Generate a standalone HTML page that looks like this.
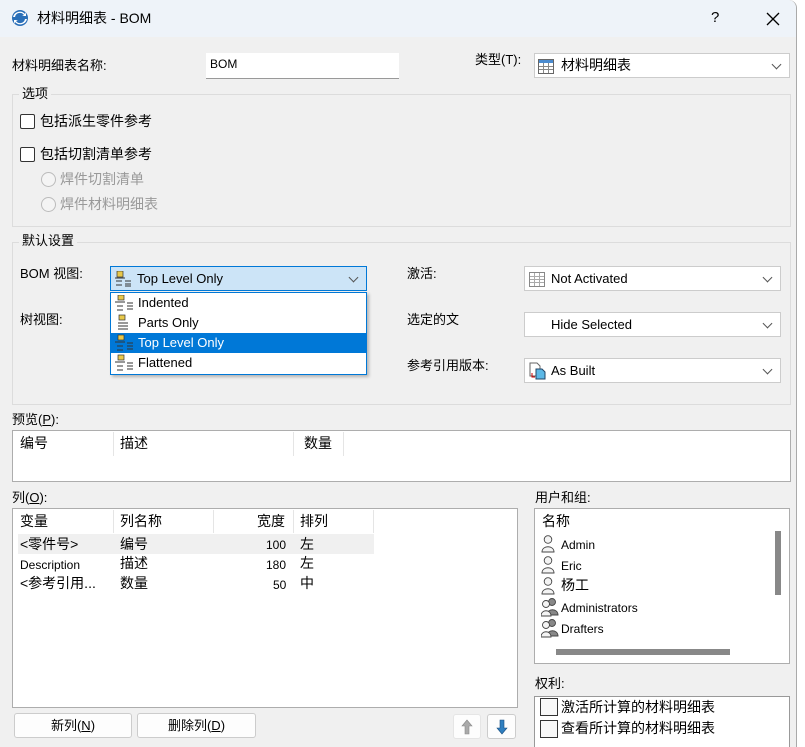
<!DOCTYPE html>
<html><head><meta charset="utf-8"><style>
html,body{margin:0;width:805px;height:747px;overflow:hidden}
body{background:#fff;font-family:"Liberation Sans","Noto Sans CJK SC",sans-serif;font-size:13px;color:#000;position:relative}
.a{position:absolute}
.dlg{position:absolute;left:0;top:0;width:796px;height:747px;background:#f0f0f0;border-right:1px solid #aaa;border-top-right-radius:8px}
.tb{position:absolute;left:0;top:0;width:796px;height:37px;background:#eef3f9;border-top-right-radius:8px}
.t{position:absolute;white-space:nowrap;line-height:16px}
.box{position:absolute;background:#fff;border:1px solid #adadad;box-sizing:border-box}
.grp{position:absolute;border:1px solid #dcdcdc;box-sizing:border-box}
.leg{position:absolute;background:#f0f0f0;padding:0 3px;line-height:16px;white-space:nowrap}
.cb{position:absolute;width:13px;height:13px;border:1px solid #333;border-radius:2px;background:#fff}
.rd{position:absolute;width:13px;height:13px;border:1px solid #bbb;border-radius:50%;background:#f4f4f4}
.combo{position:absolute;background:#fff;border:1px solid #ccc;box-sizing:border-box;height:25px}
.combo .v{position:absolute;right:9px;top:7px;width:6px;height:6px;border-right:1px solid #555;border-bottom:1px solid #555;transform:rotate(45deg)}
.btn{position:absolute;background:#fdfdfd;border:1px solid #ccc;border-radius:3px;box-sizing:border-box;text-align:center;line-height:23px}
.sep{position:absolute;width:1px;background:#e5e5e5}
.gray{color:#999}
</style></head><body>
<div class="dlg"></div>
<div class="tb"></div>
<svg class="a" style="left:11px;top:9px" width="18" height="18" viewBox="0 0 18 18"><circle cx="9" cy="9" r="8" fill="#2a6fb8"/><path d="M4 8a5 5 0 0 1 9-2l-2 1h4V3l-1 2A7 7 0 0 0 2 8z" fill="#fff"/><path d="M14 10a5 5 0 0 1-9 2l2-1H3v4l1-2a7 7 0 0 0 12-3z" fill="#fff"/></svg>
<div class="t" style="left:37px;top:10px;font-size:14px">材料明细表 - BOM</div>
<div class="t" style="left:711px;top:10px;font-size:15px">?</div>
<svg class="a" style="left:766px;top:12px" width="14" height="14"><path d="M1 1L13 13M13 1L1 13" stroke="#000" stroke-width="1.3"/></svg>

<div class="t" style="left:12px;top:58px">材料明细表名称:</div>
<div class="a" style="left:206px;top:53px;width:193px;height:25px;background:#fff;border-bottom:1px solid #999"></div>
<div class="t" style="left:210px;top:56px;font-size:12px">BOM</div>
<div class="t" style="left:475px;top:52px">类型(T):</div>
<div class="combo" style="left:534px;top:53px;width:256px"><svg class="a" style="left:3px;top:5px" width="16" height="15"><rect x=".5" y=".5" width="15" height="14" fill="#fff" stroke="#666"/><rect x="1" y="1" width="14" height="3" fill="#4a8bd0"/><path d="M1 7.5h14M1 10.5h14M5.5 4v10M10.5 4v10" stroke="#888"/></svg><div class="t" style="left:26px;top:3px;font-size:14px">材料明细表</div><div class="v"></div></div>

<div class="grp" style="left:12px;top:94px;width:779px;height:133px"></div>
<div class="leg" style="left:19px;top:86px">选项</div>
<div class="cb" style="left:20px;top:114px"></div><div class="t" style="left:40px;top:113px;font-size:14px">包括派生零件参考</div>
<div class="cb" style="left:20px;top:147px"></div><div class="t" style="left:40px;top:146px;font-size:14px">包括切割清单参考</div>
<div class="rd" style="left:41px;top:172px"></div><div class="t gray" style="left:60px;top:171px;font-size:14px">焊件切割清单</div>
<div class="rd" style="left:41px;top:197px"></div><div class="t gray" style="left:60px;top:196px;font-size:14px">焊件材料明细表</div>

<div class="grp" style="left:12px;top:242px;width:779px;height:163px"></div>
<div class="leg" style="left:19px;top:233px">默认设置</div>
<div class="t" style="left:20px;top:266px">BOM 视图:</div>
<div class="combo" style="left:110px;top:266px;width:257px;background:#cce4f7;border-color:#0078d7"><svg class="a" style="left:4px;top:4px" width="18" height="16"><rect x="2" y="0" width="6" height="6" fill="#e8c84a" stroke="#333" stroke-width=".7"/><path d="M0 7h10M1 10h6M1 14h6M10 10h6M10 13h6M10 15h6" stroke="#333"/></svg><div class="t" style="left:26px;top:4px">Top Level Only</div><div class="v"></div></div>
<div class="a" style="left:110px;top:292px;width:257px;height:83px;background:#fff;border:1px solid #0078d7;box-sizing:border-box;box-shadow:2px 2px 3px rgba(0,0,0,.25)"></div>
<div class="t" style="left:138px;top:295px">Indented</div>
<div class="t" style="left:138px;top:315px">Parts Only</div>
<div class="a" style="left:111px;top:333px;width:255px;height:20px;background:#0078d7"></div>
<div class="t" style="left:138px;top:335px;color:#fff">Top Level Only</div>
<div class="t" style="left:138px;top:355px">Flattened</div>
<svg class="a" style="left:115px;top:295px" width="20" height="78"><g fill="#e8c84a" stroke="#333" stroke-width=".7"><rect x="3" y="0" width="6" height="5"/><rect x="4" y="20" width="6" height="5"/><rect x="3" y="40" width="6" height="5"/><rect x="3" y="60" width="6" height="5"/></g><g stroke="#333"><path d="M0 7h10M2 11h6M2 15h6M12 8h6M12 11h6M12 14h6"/><path d="M3 28h10M3 31h10M3 34h10"/><path d="M0 47h10M2 51h6M2 55h6M12 48h6M12 51h6M12 54h6"/><path d="M0 67h10M2 71h6M2 75h6M12 68h6M12 71h6M12 74h6"/></g></svg>
<div class="t" style="left:20px;top:312px">树视图:</div>

<div class="t" style="left:407px;top:266px">激活:</div>
<div class="combo" style="left:524px;top:266px;width:257px"><svg class="a" style="left:4px;top:5px" width="16" height="15"><rect x=".5" y=".5" width="15" height="14" fill="#fff" stroke="#888"/><path d="M1 4.5h14M1 7.5h14M1 10.5h14M5.5 1v13M10.5 1v13" stroke="#aaa"/></svg><div class="t" style="left:26px;top:4px">Not Activated</div><div class="v"></div></div>
<div class="t" style="left:407px;top:312px">选定的文</div>
<div class="combo" style="left:524px;top:312px;width:257px"><div class="t" style="left:26px;top:4px">Hide Selected</div><div class="v"></div></div>
<div class="t" style="left:407px;top:358px">参考引用版本:</div>
<div class="combo" style="left:524px;top:358px;width:257px"><svg class="a" style="left:4px;top:3px" width="18" height="18"><path d="M1 1h7l3 3v10H1z" fill="#fff" stroke="#666"/><path d="M3 11v4h3" stroke="#c00" fill="none"/><path d="M7 7h6l3 3v7H7z" fill="#5cb8e6" stroke="#246"/></svg><div class="t" style="left:26px;top:4px">As Built</div><div class="v"></div></div>

<div class="t" style="left:12px;top:412px">预览(<u>P</u>):</div>
<div class="box" style="left:12px;top:430px;width:779px;height:52px"></div>
<div class="sep" style="left:113px;top:432px;height:24px"></div><div class="sep" style="left:293px;top:432px;height:24px"></div><div class="sep" style="left:343px;top:432px;height:24px"></div>
<div class="t" style="left:20px;top:435px;font-size:14px">编号</div><div class="t" style="left:120px;top:435px;font-size:14px">描述</div><div class="t" style="left:304px;top:435px;font-size:14px">数量</div>

<div class="t" style="left:12px;top:490px">列(<u>O</u>):</div>
<div class="box" style="left:12px;top:508px;width:506px;height:200px"></div>
<div class="sep" style="left:113px;top:510px;height:23px"></div><div class="sep" style="left:213px;top:510px;height:23px"></div><div class="sep" style="left:293px;top:510px;height:23px"></div><div class="sep" style="left:373px;top:510px;height:23px"></div>
<div class="t" style="left:20px;top:513px;font-size:14px">变量</div><div class="t" style="left:120px;top:513px;font-size:14px">列名称</div><div class="t" style="left:257px;top:513px;font-size:14px">宽度</div><div class="t" style="left:300px;top:513px;font-size:14px">排列</div>
<div class="a" style="left:18px;top:534px;width:356px;height:20px;background:#f0f0f0"></div>
<div class="t" style="left:20px;top:536px;font-size:14px">&lt;零件号&gt;</div><div class="t" style="left:120px;top:536px;font-size:14px">编号</div><div class="t" style="left:266px;top:537px;font-size:12px">100</div><div class="t" style="left:300px;top:536px;font-size:14px">左</div>
<div class="t" style="left:20px;top:557px;font-size:12px">Description</div><div class="t" style="left:120px;top:555px;font-size:14px">描述</div><div class="t" style="left:266px;top:557px;font-size:12px">180</div><div class="t" style="left:300px;top:555px;font-size:14px">左</div>
<div class="t" style="left:20px;top:575px;font-size:14px">&lt;参考引用...</div><div class="t" style="left:120px;top:575px;font-size:14px">数量</div><div class="t" style="left:273px;top:577px;font-size:12px">50</div><div class="t" style="left:300px;top:575px;font-size:14px">中</div>
<div class="btn" style="left:14px;top:713px;width:118px;height:25px">新列(<u>N</u>)</div>
<div class="btn" style="left:137px;top:713px;width:119px;height:25px">删除列(<u>D</u>)</div>
<div class="btn" style="left:453px;top:714px;width:28px;height:25px;border-color:#e5e5e5"><svg width="12" height="16" style="margin-top:4px"><path d="M6 1L1 7h3v8h4V7h3z" fill="#aaa" stroke="#888" stroke-width=".6"/></svg></div>
<div class="btn" style="left:487px;top:714px;width:29px;height:25px"><svg width="12" height="16" style="margin-top:4px"><path d="M6 15L1 9h3V1h4v8h3z" fill="#2f7fc0" stroke="#1a4f80" stroke-width=".6"/></svg></div>

<div class="t" style="left:535px;top:490px">用户和组:</div>
<div class="box" style="left:534px;top:508px;width:256px;height:156px"></div>
<div class="t" style="left:542px;top:513px;font-size:14px">名称</div>
<svg class="a" style="left:541px;top:535px" width="18" height="105"><g fill="#f4f4f4" stroke="#444" stroke-width=".9"><circle cx="7" cy="4.5" r="3.8"/><path d="M1 17c0-7 12-7 12 0z"/><circle cx="7" cy="25.5" r="3.8"/><path d="M1 38c0-7 12-7 12 0z"/><circle cx="7" cy="46.5" r="3.8"/><path d="M1 59c0-7 12-7 12 0z"/><circle cx="11" cy="67" r="3.5" fill="#888"/><path d="M6 80c0-7 11-7 11 0z" fill="#888"/><circle cx="5" cy="69" r="3.5"/><path d="M0 81c0-7 10-7 10 0z"/><circle cx="11" cy="88" r="3.5" fill="#888"/><path d="M6 101c0-7 11-7 11 0z" fill="#888"/><circle cx="5" cy="90" r="3.5"/><path d="M0 102c0-7 10-7 10 0z"/></g></svg>
<div class="t" style="left:561px;top:537px;font-size:12px">Admin</div>
<div class="t" style="left:561px;top:558px;font-size:12px">Eric</div>
<div class="t" style="left:561px;top:577px;font-size:14px">杨工</div>
<div class="t" style="left:561px;top:600px;font-size:12px">Administrators</div>
<div class="t" style="left:561px;top:621px;font-size:12px">Drafters</div>
<div class="a" style="left:775px;top:531px;width:6px;height:64px;background:#888"></div>
<div class="a" style="left:556px;top:649px;width:174px;height:6px;background:#888"></div>

<div class="t" style="left:535px;top:676px">权利:</div>
<div class="box" style="left:534px;top:696px;width:256px;height:60px;border-color:#999"></div>
<div class="a" style="left:540px;top:698px;width:16px;height:16px;border:1px solid #333;background:#f8f8f8"></div>
<div class="t" style="left:561px;top:699px;font-size:14px">激活所计算的材料明细表</div>
<div class="a" style="left:540px;top:720px;width:16px;height:16px;border:1px solid #333;background:#f8f8f8"></div>
<div class="t" style="left:561px;top:720px;font-size:14px">查看所计算的材料明细表</div>
</body></html>
